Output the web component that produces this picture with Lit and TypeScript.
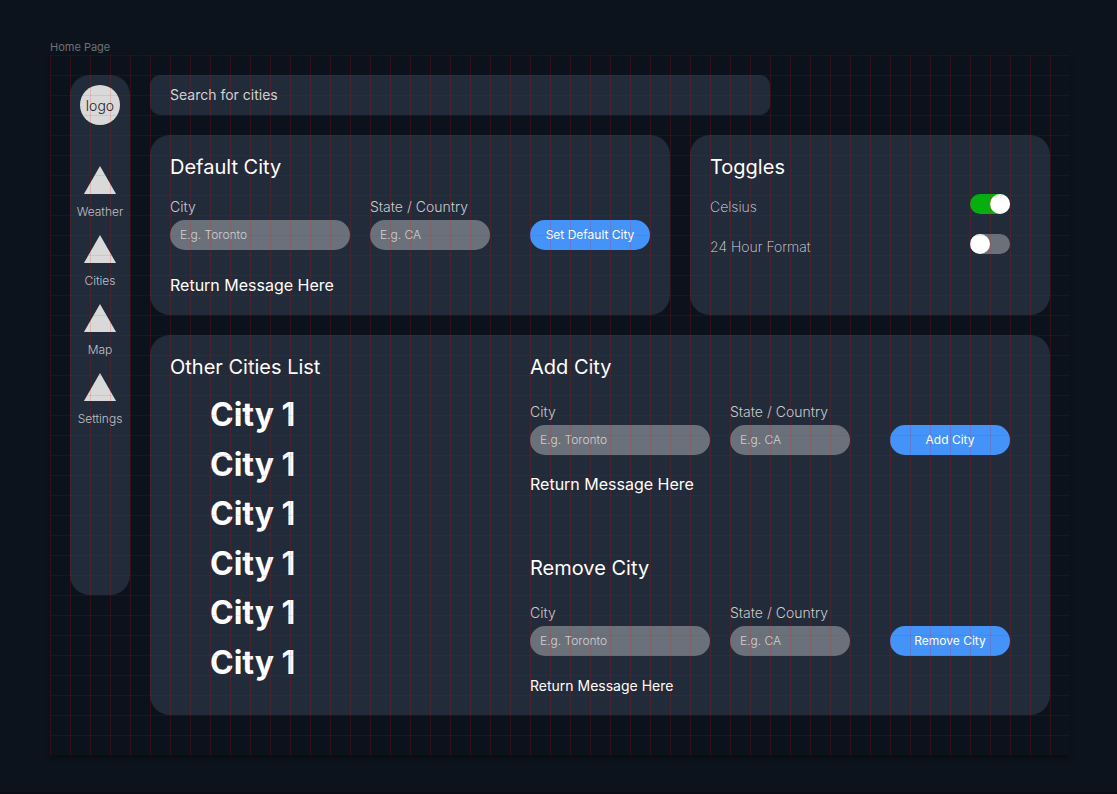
import { LitElement, html, css } from "lit";
import { customElement, property } from "lit/decorators.js";

@customElement("city-form")
class CityForm extends LitElement {
  @property() heading = "";
  @property() action = "";

  static styles = css`
    :host {
      display: block;
    }
    .title {
      margin: 0 0 var(--title-gap, 24px);
      font-size: 20px;
      line-height: 24px;
      font-weight: 400;
      color: #fff;
    }
    .fields {
      display: grid;
      grid-template-columns: 9fr 6fr 7fr;
      column-gap: 20px;
      align-items: end;
    }
    .field {
      display: flex;
      flex-direction: column;
      gap: 5px;
      min-width: 0;
    }
    .label {
      font-size: 14px;
      line-height: 17px;
      font-weight: 300;
      color: #c8cbd0;
      white-space: nowrap;
    }
    .input,
    .button {
      box-sizing: border-box;
      width: 100%;
      height: 30px;
      border: 0;
      border-radius: 15px;
      font-family: inherit;
      font-size: 12px;
    }
    .input {
      padding: 0 10px 2px;
      background: #6b717a;
      color: #fff;
      font-weight: 300;
    }
    .input::placeholder {
      color: #d0d2d5;
      opacity: 1;
    }
    .submit {
      padding-left: 20px;
    }
    .button {
      display: block;
      padding: 0 0 2px;
      background: #4393f8;
      color: #fff;
      font-weight: 400;
      cursor: pointer;
    }
    .message {
      margin: var(--message-gap, 20px) 0 0;
      font-size: var(--message-size, 16px);
      line-height: 19px;
      color: #fff;
    }
  `;

  render() {
    return html`
      <form @submit=${(e: Event) => e.preventDefault()}>
        <h2 class="title">${this.heading}</h2>
        <div class="fields">
          <div class="field">
            <label class="label" for="city">City</label>
            <input class="input" id="city" type="text" placeholder="E.g. Toronto" />
          </div>
          <div class="field">
            <label class="label" for="region">State / Country</label>
            <input class="input" id="region" type="text" placeholder="E.g. CA" />
          </div>
          <div class="submit">
            <button class="button" type="submit">${this.action}</button>
          </div>
        </div>
        <p class="message">Return Message Here</p>
      </form>
    `;
  }
}

@customElement("app-root")
class AppRoot extends LitElement {
  static styles = css`
    :host {
      display: block;
      box-sizing: border-box;
      min-height: 100vh;
      padding: 40px 47px 37px 50px;
      border-bottom: 2px solid #0c0c17;
      background: #0c131c;
      font-family: Inter, "Liberation Sans", sans-serif;
      font-weight: 400;
      color: #fff;
    }
    .page-name {
      margin: 0;
      font-size: 11px;
      line-height: 15px;
      font-weight: 400;
      color: #6d7177;
    }
    .frame {
      position: relative;
      display: grid;
      grid-template-columns: 60px minmax(0, 1fr);
      column-gap: 20px;
      align-items: start;
      padding: 20px 20px 40px;
      background: #0c121b;
      box-shadow: 0 4px 4px rgba(0, 0, 0, 0.25);
    }
    .frame::after {
      content: "";
      position: absolute;
      inset: 0;
      pointer-events: none;
      background-image: linear-gradient(to right, rgba(255, 0, 0, 0.16) 1px, transparent 1px),
        linear-gradient(to bottom, rgba(255, 0, 0, 0.12) 1px, transparent 1px);
      background-size: 20px 20px;
    }
    .sidebar {
      box-sizing: border-box;
      min-height: 520px;
      padding: 10px 0;
      border-radius: 20px;
      background: #222b39;
      display: flex;
      flex-direction: column;
      align-items: center;
      gap: 41px;
    }
    .logo {
      display: grid;
      place-items: center;
      width: 40px;
      height: 40px;
      border-radius: 50%;
      background: #d9d9d9;
      color: #222;
      font-size: 14px;
      font-weight: 300;
      text-decoration: none;
    }
    .nav {
      display: flex;
      flex-direction: column;
      gap: 16px;
    }
    .nav-link {
      display: flex;
      flex-direction: column;
      align-items: center;
      gap: 10px;
      font-size: 12px;
      line-height: 15px;
      font-weight: 300;
      color: #c0c3c8;
      text-decoration: none;
    }
    .triangle {
      display: block;
      width: 34px;
      height: 28px;
      fill: #d9d9d9;
    }
    .content {
      display: grid;
      grid-template-columns: 26fr 18fr;
      gap: 20px;
    }
    .search-row {
      grid-column: 1 / -1;
      display: flex;
    }
    .search {
      box-sizing: border-box;
      width: 100%;
      max-width: 620px;
      height: 40px;
      padding: 0 20px 1px;
      border: 0;
      border-radius: 10px;
      background: #222b39;
      color: #fff;
      font-family: inherit;
      font-size: 14px;
    }
    .search::placeholder {
      color: #d3d5d8;
      opacity: 1;
    }
    .card {
      padding: 20px;
      border-radius: 20px;
      background: #222b39;
    }
    .default-card {
      --title-gap: 19px;
      --message-gap: 26px;
    }
    .toggle-card {
      padding-right: 40px;
    }
    .title {
      margin: 0;
      font-size: 20px;
      line-height: 24px;
      font-weight: 400;
    }
    .toggles {
      display: flex;
      flex-direction: column;
      gap: 20px;
      padding-top: 15px;
    }
    .toggle-row {
      display: flex;
      align-items: flex-start;
      justify-content: space-between;
      height: 20px;
    }
    .toggle-label {
      padding-top: 4px;
      font-size: 14px;
      line-height: 17px;
      font-weight: 200;
      color: #dcdee1;
    }
    .toggle {
      appearance: none;
      display: flex;
      width: 40px;
      height: 20px;
      margin: 0;
      border-radius: 10px;
      background: #6b717a;
      cursor: pointer;
    }
    .toggle::before {
      content: "";
      width: 20px;
      height: 20px;
      border-radius: 50%;
      background: #fff;
    }
    .toggle:checked {
      justify-content: flex-end;
      background: #06ae10;
    }
    .cities-card {
      grid-column: 1 / -1;
      display: grid;
      grid-template-columns: 3fr 4fr;
      padding-right: 40px;
    }
    .list-column {
      display: flex;
      flex-direction: column;
    }
    .cities {
      flex: 1;
      display: flex;
      flex-direction: column;
      justify-content: space-between;
      margin: 0;
      padding: 16px 0 13px 40px;
      list-style: none;
      font-size: 32px;
      line-height: 39px;
      font-weight: 700;
    }
    .forms {
      display: flex;
      flex-direction: column;
      gap: 62px;
    }
    .remove-form {
      --message-size: 14px;
    }
  `;

  private links = ["Weather", "Cities", "Map", "Settings"];
  private cities = ["City 1", "City 1", "City 1", "City 1", "City 1", "City 1"];

  render() {
    return html`
      <h1 class="page-name">Home Page</h1>
      <div class="frame">
        <aside class="sidebar">
          <a class="logo" href="#">logo</a>
          <nav class="nav" aria-label="Main">
            ${this.links.map(
              (name) => html`
                <a class="nav-link" href="#">
                  <svg class="triangle" viewBox="0 0 34 28" aria-hidden="true">
                    <path d="M17 0L33.3 28.4H0.7Z" />
                  </svg>
                  <span>${name}</span>
                </a>
              `
            )}
          </nav>
        </aside>
        <main class="content">
          <div class="search-row">
            <input class="search" type="search" placeholder="Search for cities" aria-label="Search for cities" />
          </div>
          <section class="card default-card">
            <city-form heading="Default City" action="Set Default City"></city-form>
          </section>
          <section class="card toggle-card">
            <h2 class="title">Toggles</h2>
            <div class="toggles">
              <div class="toggle-row">
                <label class="toggle-label" for="celsius">Celsius</label>
                <input class="toggle" id="celsius" type="checkbox" role="switch" checked />
              </div>
              <div class="toggle-row">
                <label class="toggle-label" for="hours">24 Hour Format</label>
                <input class="toggle" id="hours" type="checkbox" role="switch" />
              </div>
            </div>
          </section>
          <section class="card cities-card">
            <div class="list-column">
              <h2 class="title">Other Cities List</h2>
              <ul class="cities">
                ${this.cities.map((city) => html`<li>${city}</li>`)}
              </ul>
            </div>
            <div class="forms">
              <city-form heading="Add City" action="Add City"></city-form>
              <city-form class="remove-form" heading="Remove City" action="Remove City"></city-form>
            </div>
          </section>
        </main>
      </div>
    `;
  }
}
